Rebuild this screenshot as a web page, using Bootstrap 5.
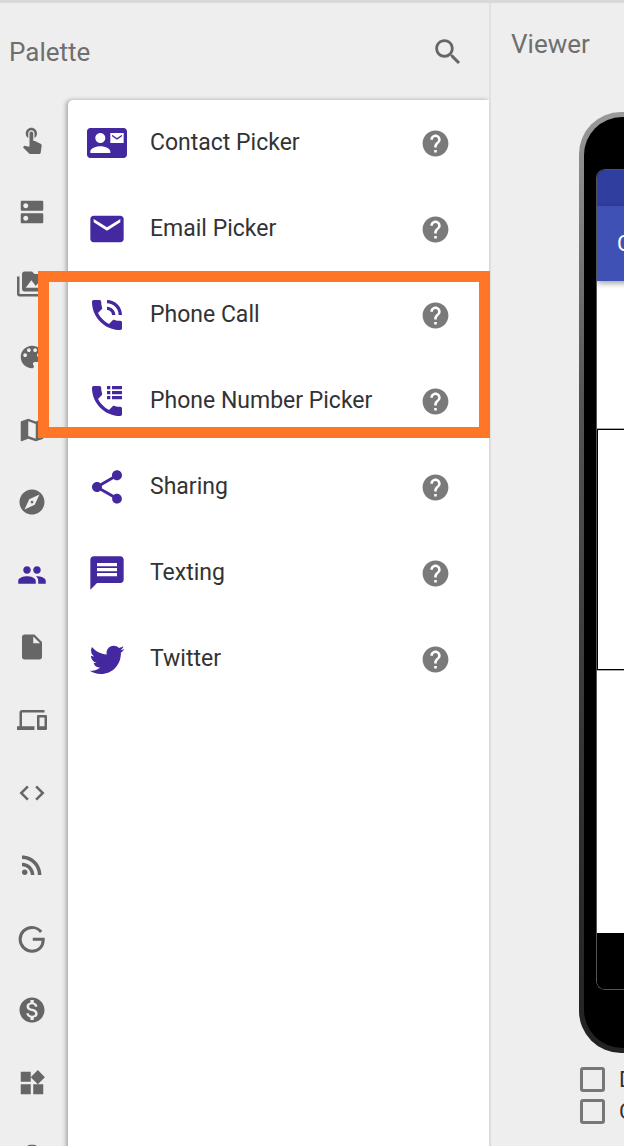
<!DOCTYPE html>
<html>
<head>
    <title>Palette and Viewer</title>
    <link href="https://cdn.jsdelivr.net/npm/bootstrap@5.3.0/dist/css/bootstrap.min.css" rel="stylesheet">
    <style>
        html, body { height: 100%; }
        body {
            background: #eeeeee;
            font-family: Roboto, "Liberation Sans", sans-serif;
            overflow: hidden;
            border-top: 3px solid #d9d9d9;
        }
        .pane-title { font-size: 26px; color: #6f6f6f; line-height: 1; }
        .palette-pane { width: 491px; flex: none; border-right: 2px solid #e2e2e2; position: relative; }
        .palette-head { height: 97px; flex: none; padding: 0 24px 0 9px; }
        .search-ico { width: 34px; height: 34px; fill: #666; }
        .side-bar { width: 68px; flex: none; padding: 3px 4px 0 0; }
        .side-item { height: 72.6px; }
        .side-ico { width: 30px; height: 30px; fill: #666; }
        .side-ico.active { fill: #44289f; }
        .item-panel {
            background: #fff;
            border-top-left-radius: 5px;
            box-shadow: -2px 0 4px rgba(0, 0, 0, .3);
        }
        .item-row { height: 86px; padding: 0 38px 0 19px; }
        .item-ico { width: 40px; height: 40px; fill: #44289f; flex: none; }
        .item-name { font-size: 23px; color: #333; margin-left: 23px; flex: 1; }
        .help-ico { width: 31px; height: 31px; fill: #7a7a7a; flex: none; }
        .hilite {
            position: absolute;
            left: 38px;
            top: 268px;
            width: 452px;
            height: 167px;
            border: 11px solid #ff7626;
            pointer-events: none;
        }
        .viewer-pane { flex: 1; min-width: 0; overflow: hidden; }
        .viewer-head { height: 82px; padding: 0 0 0 20px; }
        .phone-shell {
            margin: 27px 0 0 88px;
            width: 340px;
            height: 941px;
            padding: 5px 0 5px 5px;
            border-radius: 42px 0 0 42px;
            background: linear-gradient(#999, #555 30%, #333 70%, #222);
        }
        .phone-face {
            height: 100%;
            padding: 52px 0 58px 12px;
            border-radius: 38px 0 0 38px;
            background: #000;
        }
        .phone-screen {
            height: 100%;
            border: 1px solid #555;
            border-right: 0;
            border-radius: 9px 0 0 9px;
            overflow: hidden;
        }
        .status-strip { height: 36px; background: #303f9f; flex: none; }
        .title-strip {
            height: 75px;
            flex: none;
            padding-left: 20px;
            background: #3f51b5;
            color: #fff;
            font-size: 22px;
            box-shadow: 0 2px 6px rgba(0, 0, 0, .4);
            position: relative;
        }
        .screen-body { background: #fff; flex: 1; padding-top: 148px; }
        .screen-box { height: 241px; border: 1px solid #000; border-right: 0; box-shadow: 0 0 0 1px #aaa; }
        .nav-strip { height: 56px; background: #000; flex: none; }
        .opt-list { margin: 14px 0 0 89px; gap: 7px; }
        .opt-row { height: 25px; gap: 14px; font-size: 22px; color: #333; }
        .opt-box.form-check-input[type=checkbox] {
            width: 25px;
            height: 25px;
            margin: 0;
            flex: none;
            background-color: transparent;
            border: 3px solid #777;
            border-radius: 3px;
        }
    </style>
</head>
<body>
    <svg width="0" height="0" class="d-none">
        <symbol id="i-search" viewBox="0 0 24 24"><path d="M15.5 14h-.79l-.28-.27C15.41 12.59 16 11.11 16 9.5 16 5.91 13.09 3 9.5 3S3 5.91 3 9.5 5.91 16 9.5 16c1.61 0 3.09-.59 4.23-1.57l.27.28v.79l5 4.99L20.49 19l-4.99-5zm-6 0C7.01 14 5 11.99 5 9.5S7.01 5 9.5 5 14 7.01 14 9.5 11.99 14 9.5 14z"/></symbol>
        <symbol id="i-help" viewBox="0 0 24 24"><path d="M12 2C6.48 2 2 6.48 2 12s4.48 10 10 10 10-4.48 10-10S17.52 2 12 2zm1 17h-2v-2h2v2zm2.07-7.75l-.9.92C13.45 12.9 13 13.5 13 15h-2v-.5c0-1.1.45-2.1 1.17-2.83l1.24-1.26c.37-.36.59-.86.59-1.41 0-1.1-.9-2-2-2s-2 .9-2 2H8c0-2.21 1.79-4 4-4s4 1.79 4 4c0 .88-.36 1.68-.93 2.25z"/></symbol>
    </svg>

    <div class="d-flex h-100">
        <div class="palette-pane d-flex flex-column">
            <div class="palette-head d-flex align-items-center justify-content-between">
                <span class="pane-title">Palette</span>
                <svg class="search-ico" viewBox="0 0 24 24"><use href="#i-search"/></svg>
            </div>
            <div class="d-flex flex-grow-1">
                <div class="side-bar">
                    <div class="side-item d-flex align-items-center justify-content-center"><svg class="side-ico" viewBox="0 0 24 24"><path d="M9 11.24V7.5C9 6.12 10.12 5 11.5 5S14 6.12 14 7.5v3.74c1.21-.81 2-2.18 2-3.74C16 5.01 13.99 3 11.5 3S7 5.01 7 7.5c0 1.56.79 2.93 2 3.74zm9.84 4.63l-4.54-2.26c-.17-.07-.35-.11-.54-.11H13v-6c0-.83-.67-1.5-1.5-1.5S10 6.67 10 7.5v10.74l-3.43-.72c-.08-.01-.15-.03-.24-.03-.31 0-.59.13-.79.33l-.79.8 4.94 4.94c.27.27.65.44 1.06.44h6.79c.75 0 1.33-.55 1.44-1.28l.75-5.27c.01-.07.02-.14.02-.2 0-.62-.38-1.16-.91-1.38z"/></svg></div>
                    <div class="side-item d-flex align-items-center justify-content-center"><svg class="side-ico" viewBox="0 0 24 24"><path d="M20 13H4c-.55 0-1 .45-1 1v6c0 .55.45 1 1 1h16c.55 0 1-.45 1-1v-6c0-.55-.45-1-1-1zM7 19c-1.1 0-2-.9-2-2s.9-2 2-2 2 .9 2 2-.9 2-2 2zM20 3H4c-.55 0-1 .45-1 1v6c0 .55.45 1 1 1h16c.55 0 1-.45 1-1V4c0-.55-.45-1-1-1zM7 9c-1.1 0-2-.9-2-2s.9-2 2-2 2 .9 2 2-.9 2-2 2z"/></svg></div>
                    <div class="side-item d-flex align-items-center justify-content-center"><svg class="side-ico" viewBox="0 0 24 24"><path d="M2 6H0v5h.01L0 20c0 1.1.9 2 2 2h18v-2H2V6zm20-2h-8l-2-2H6c-1.1 0-1.99.9-1.99 2L4 16c0 1.1.9 2 2 2h16c1.1 0 2-.9 2-2V6c0-1.1-.9-2-2-2zM7 15l4.5-6 3.5 4.51 2.5-3.01L21 15H7z"/></svg></div>
                    <div class="side-item d-flex align-items-center justify-content-center"><svg class="side-ico" viewBox="0 0 24 24"><path d="M12 3c-4.97 0-9 4.03-9 9s4.03 9 9 9c.83 0 1.5-.67 1.5-1.5 0-.39-.15-.74-.39-1.01-.23-.26-.38-.61-.38-.99 0-.83.67-1.5 1.5-1.5H16c2.76 0 5-2.24 5-5 0-4.42-4.03-8-9-8zm-5.5 9c-.83 0-1.5-.67-1.5-1.5S5.67 9 6.5 9 8 9.67 8 10.5 7.33 12 6.5 12zm3-4C8.67 8 8 7.33 8 6.5S8.67 5 9.5 5s1.5.67 1.5 1.5S10.33 8 9.5 8zm5 0c-.83 0-1.5-.67-1.5-1.5S13.67 5 14.5 5s1.5.67 1.5 1.5S15.33 8 14.5 8zm3 4c-.83 0-1.5-.67-1.5-1.5S16.67 9 17.5 9s1.5.67 1.5 1.5-.67 1.5-1.5 1.5z"/></svg></div>
                    <div class="side-item d-flex align-items-center justify-content-center"><svg class="side-ico" viewBox="0 0 24 24"><path d="M20.5 3l-.16.03L15 5.1 9 3 3.36 4.9c-.21.07-.36.25-.36.48V20.5c0 .28.22.5.5.5l.16-.03L9 18.9l6 2.1 5.64-1.9c.21-.07.36-.25.36-.48V3.5c0-.28-.22-.5-.5-.5zM15 19l-6-2.11V5l6 2.11V19z"/></svg></div>
                    <div class="side-item d-flex align-items-center justify-content-center"><svg class="side-ico" viewBox="0 0 24 24"><path d="M12 10.9c-.61 0-1.1.49-1.1 1.1s.49 1.1 1.1 1.1c.61 0 1.1-.49 1.1-1.1s-.49-1.1-1.1-1.1zM12 2C6.48 2 2 6.48 2 12s4.48 10 10 10 10-4.48 10-10S17.52 2 12 2zm2.19 12.19L6 18l3.81-8.19L18 6l-3.81 8.19z"/></svg></div>
                    <div class="side-item d-flex align-items-center justify-content-center"><svg class="side-ico active" viewBox="0 0 24 24"><path d="M16 11c1.66 0 2.99-1.34 2.99-3S17.66 5 16 5c-1.66 0-3 1.34-3 3s1.34 3 3 3zm-8 0c1.66 0 2.99-1.34 2.99-3S9.66 5 8 5C6.34 5 5 6.34 5 8s1.34 3 3 3zm0 2c-2.33 0-7 1.17-7 3.5V19h14v-2.5c0-2.33-4.67-3.5-7-3.5zm8 0c-.29 0-.62.02-.97.05 1.16.84 1.97 1.97 1.97 3.45V19h6v-2.5c0-2.33-4.67-3.5-7-3.5z"/></svg></div>
                    <div class="side-item d-flex align-items-center justify-content-center"><svg class="side-ico" viewBox="0 0 24 24"><path d="M6 2c-1.1 0-1.99.9-1.99 2L4 20c0 1.1.89 2 1.99 2H18c1.1 0 2-.9 2-2V8l-6-6H6zm7 7V3.5L18.5 9H13z"/></svg></div>
                    <div class="side-item d-flex align-items-center justify-content-center"><svg class="side-ico" viewBox="0 0 24 24"><path d="M4 6h18V4H4c-1.1 0-2 .9-2 2v11H0v3h14v-3H4V6zm19 2h-6c-.55 0-1 .45-1 1v10c0 .55.45 1 1 1h6c.55 0 1-.45 1-1V9c0-.55-.45-1-1-1zm-1 9h-4v-7h4v7z"/></svg></div>
                    <div class="side-item d-flex align-items-center justify-content-center"><svg class="side-ico" viewBox="0 0 24 24"><path d="M9.4 16.6L4.8 12l4.6-4.6L8 6l-6 6 6 6 1.4-1.4zm5.2 0l4.6-4.6-4.6-4.6L16 6l6 6-6 6-1.4-1.4z"/></svg></div>
                    <div class="side-item d-flex align-items-center justify-content-center"><svg class="side-ico" viewBox="0 0 24 24"><circle cx="6.18" cy="17.82" r="2.18"/><path d="M4 4.44v2.83c7.03 0 12.73 5.7 12.73 12.73h2.83c0-8.59-6.97-15.56-15.56-15.56zm0 5.66v2.83c3.9 0 7.07 3.17 7.07 7.07h2.83c0-5.47-4.43-9.9-9.9-9.9z"/></svg></div>
                    <div class="side-item d-flex align-items-center justify-content-center"><svg class="side-ico" viewBox="0 0 24 24"><path fill="none" stroke="#666" stroke-width="2.4" d="M19.3 7.2A9.600 9.600 0 0 0 12 3.500a9.500 9.500 0 1 0 0 19c5.400 0 9-3.600 9-9.500H12.600"/></svg></div>
                    <div class="side-item d-flex align-items-center justify-content-center"><svg class="side-ico" viewBox="0 0 24 24"><path d="M12 2C6.48 2 2 6.48 2 12s4.48 10 10 10 10-4.48 10-10S17.52 2 12 2zm1.41 16.09V20h-2.67v-1.93c-1.71-.36-3.16-1.46-3.27-3.4h1.96c.1 1.05.82 1.87 2.65 1.87 1.96 0 2.4-.98 2.4-1.59 0-.83-.44-1.61-2.67-2.14-2.48-.6-4.18-1.62-4.18-3.67 0-1.72 1.39-2.84 3.11-3.21V4h2.67v1.95c1.86.45 2.79 1.86 2.85 3.39H14.3c-.05-1.11-.64-1.87-2.22-1.87-1.5 0-2.4.68-2.4 1.64 0 .84.65 1.39 2.67 1.91s4.18 1.39 4.18 3.91c-.01 1.83-1.38 2.83-3.12 3.16z"/></svg></div>
                    <div class="side-item d-flex align-items-center justify-content-center"><svg class="side-ico" viewBox="0 0 24 24"><path d="M13 13v8h8v-8h-8zM3 21h8v-8H3v8zM3 3v8h8V3H3zm13.66-1.31L11 7.34 16.66 13l5.66-5.66-5.66-5.65z"/></svg></div>
                    <div class="side-item d-flex align-items-center justify-content-center"><svg class="side-ico" viewBox="0 0 24 24"><rect x="6" y="3" width="12" height="18" rx="5"/></svg></div>
                </div>
                <div class="item-panel flex-grow-1">
                    <div class="item-row d-flex align-items-center">
                        <svg class="item-ico" viewBox="0 0 24 24"><path d="M21 8V7l-3 2-3-2v1l3 2 3-2zm1-5H2C.9 3 0 3.9 0 5v14c0 1.1.9 2 2 2h20c1.1 0 1.99-.9 1.99-2L24 5c0-1.1-.9-2-2-2zM8 6c1.66 0 3 1.34 3 3s-1.34 3-3 3-3-1.34-3-3 1.34-3 3-3zm6 12H2v-1c0-2 4-3.1 6-3.1s6 1.1 6 3.1v1zm8-6h-8V6h8v6z"/></svg>
                        <span class="item-name">Contact Picker</span>
                        <svg class="help-ico" viewBox="0 0 24 24"><use href="#i-help"/></svg>
                    </div>
                    <div class="item-row d-flex align-items-center">
                        <svg class="item-ico" viewBox="0 0 24 24"><path d="M20 4H4c-1.1 0-1.99.9-1.99 2L2 18c0 1.1.9 2 2 2h16c1.1 0 2-.9 2-2V6c0-1.1-.9-2-2-2zm0 4l-8 5-8-5V6l8 5 8-5v2z"/></svg>
                        <span class="item-name">Email Picker</span>
                        <svg class="help-ico" viewBox="0 0 24 24"><use href="#i-help"/></svg>
                    </div>
                    <div class="item-row d-flex align-items-center">
                        <svg class="item-ico" viewBox="0 0 24 24"><path d="M20 15.5c-1.25 0-2.45-.2-3.57-.57-.35-.11-.74-.03-1.02.24l-2.2 2.2c-2.83-1.44-5.15-3.75-6.59-6.59l2.2-2.21c.28-.26.36-.65.25-1C8.700 6.450 8.500 5.250 8.500 4c0-.55-.45-1-1-1H4c-.55 0-1 .45-1 1 0 9.390 7.610 17 17 17 .55 0 1-.45 1-1v-3.500c0-.55-.45-1-1-1zM19 12h2c0-4.970-4.030-9-9-9v2c3.870 0 7 3.130 7 7zm-4 0h2c0-2.760-2.240-5-5-5v2c1.660 0 3 1.340 3 3z"/></svg>
                        <span class="item-name">Phone Call</span>
                        <svg class="help-ico" viewBox="0 0 24 24"><use href="#i-help"/></svg>
                    </div>
                    <div class="item-row d-flex align-items-center">
                        <svg class="item-ico" viewBox="0 0 24 24"><path d="M20 15.500c-1.250 0-2.450-.2-3.570-.57-.35-.11-.74-.03-1.020.24l-2.200 2.200c-2.830-1.440-5.150-3.750-6.590-6.590l2.200-2.210c.28-.26.36-.65.25-1C8.700 6.450 8.500 5.250 8.500 4c0-.55-.45-1-1-1H4c-.55 0-1 .45-1 1 0 9.390 7.610 17 17 17 .55 0 1-.45 1-1v-3.500c0-.55-.45-1-1-1zM12 3h2v2h-2zM15 3h6v2h-6zM12 6h2v2h-2zM15 6h6v2h-6zM12 9h2v2h-2zM15 9h6v2h-6z"/></svg>
                        <span class="item-name">Phone Number Picker</span>
                        <svg class="help-ico" viewBox="0 0 24 24"><use href="#i-help"/></svg>
                    </div>
                    <div class="item-row d-flex align-items-center">
                        <svg class="item-ico" viewBox="0 0 24 24"><path d="M18 16.080c-.76 0-1.440.3-1.960.77L8.910 12.700c.05-.23.09-.46.09-.7s-.04-.47-.09-.7l7.050-4.110c.54.5 1.250.81 2.040.81 1.660 0 3-1.340 3-3s-1.340-3-3-3-3 1.340-3 3c0 .24.04.47.09.7L8.040 9.810C7.500 9.310 6.790 9 6 9c-1.660 0-3 1.340-3 3s1.340 3 3 3c.79 0 1.500-.31 2.040-.81l7.120 4.160c-.05.21-.08.43-.08.65 0 1.610 1.310 2.920 2.920 2.920 1.610 0 2.920-1.310 2.920-2.920s-1.310-2.920-2.920-2.920z"/></svg>
                        <span class="item-name">Sharing</span>
                        <svg class="help-ico" viewBox="0 0 24 24"><use href="#i-help"/></svg>
                    </div>
                    <div class="item-row d-flex align-items-center">
                        <svg class="item-ico" viewBox="0 0 24 24"><path d="M20 2H4c-1.100 0-1.990.9-1.990 2L2 22l4-4h14c1.100 0 2-.9 2-2V4c0-1.100-.9-2-2-2zm-2 12H6v-2h12v2zm0-3H6V9h12v2zm0-3H6V6h12v2z"/></svg>
                        <span class="item-name">Texting</span>
                        <svg class="help-ico" viewBox="0 0 24 24"><use href="#i-help"/></svg>
                    </div>
                    <div class="item-row d-flex align-items-center">
                        <svg class="item-ico" viewBox="0 0 24 24"><path d="M22.460 6c-.77.35-1.600.58-2.460.69.88-.53 1.560-1.370 1.880-2.380-.83.5-1.750.85-2.720 1.050C18.370 4.500 17.260 4 16 4c-2.350 0-4.270 1.920-4.270 4.290 0 .34.04.67.11.98C8.280 9.090 5.110 7.380 3 4.790c-.37.63-.58 1.370-.58 2.150 0 1.490.75 2.810 1.910 3.560-.71 0-1.370-.2-1.950-.5v.03c0 2.080 1.480 3.820 3.440 4.210a4.220 4.220 0 0 1-1.930.07 4.280 4.280 0 0 0 4 2.980 8.521 8.521 0 0 1-5.330 1.840c-.34 0-.68-.02-1.020-.06C3.440 20.290 5.700 21 8.120 21 16 21 20.330 14.460 20.330 8.790c0-.19 0-.37-.01-.56.84-.6 1.560-1.360 2.140-2.230z"/></svg>
                        <span class="item-name">Twitter</span>
                        <svg class="help-ico" viewBox="0 0 24 24"><use href="#i-help"/></svg>
                    </div>
                </div>
            </div>
            <div class="hilite"></div>
        </div>

        <div class="viewer-pane">
            <div class="viewer-head d-flex align-items-center">
                <span class="pane-title">Viewer</span>
            </div>
            <div class="phone-shell">
                <div class="phone-face">
                    <div class="phone-screen d-flex flex-column">
                        <div class="status-strip"></div>
                        <div class="title-strip d-flex align-items-center">C</div>
                        <div class="screen-body">
                            <div class="screen-box"></div>
                        </div>
                        <div class="nav-strip"></div>
                    </div>
                </div>
            </div>
            <div class="opt-list d-flex flex-column">
                <div class="opt-row d-flex align-items-center"><input class="form-check-input opt-box" type="checkbox"><span>D</span></div>
                <div class="opt-row d-flex align-items-center"><input class="form-check-input opt-box" type="checkbox"><span>C</span></div>
            </div>
        </div>
    </div>
</body>
</html>
